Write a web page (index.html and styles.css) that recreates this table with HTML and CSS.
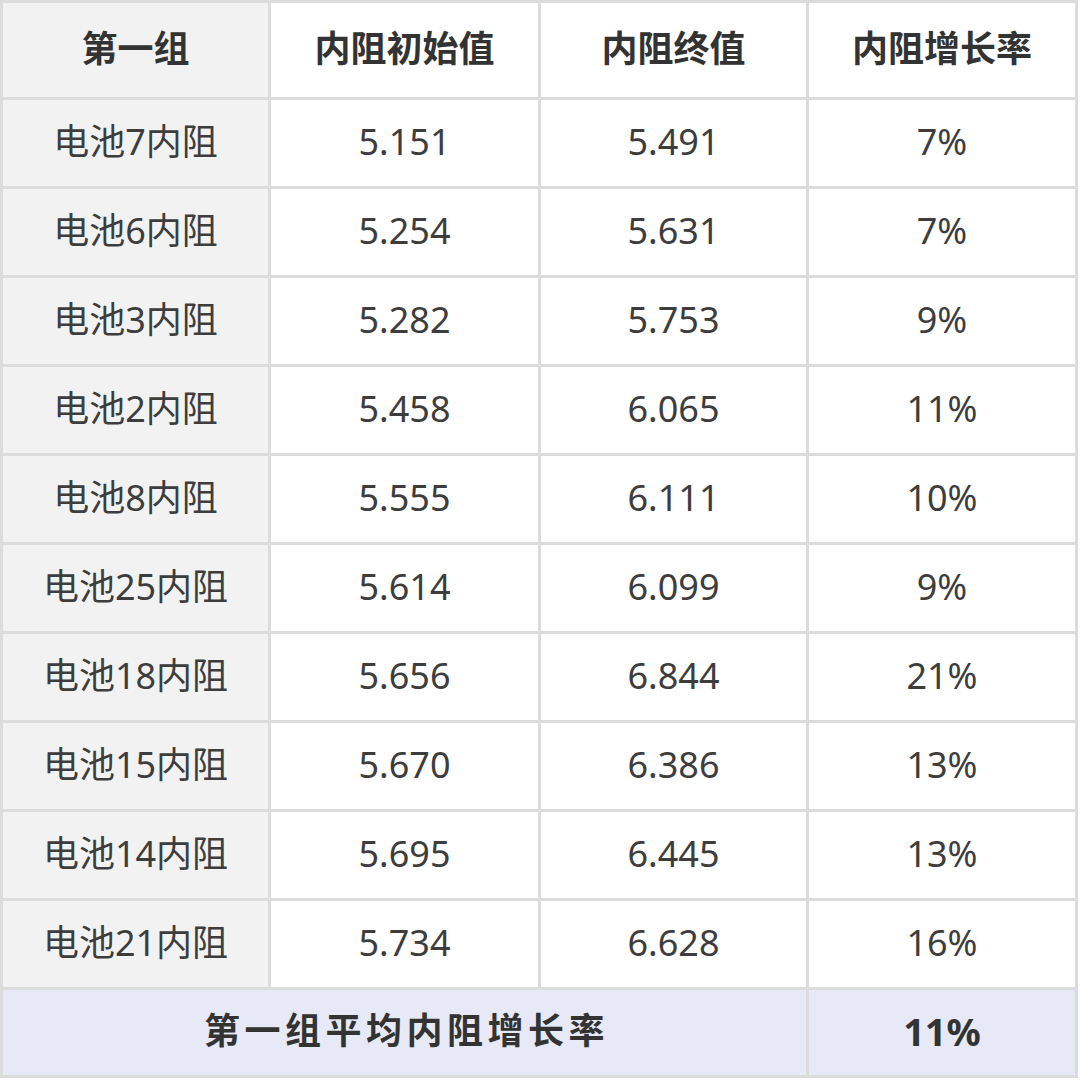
FILE: index.html
```html
<!DOCTYPE html>
<html lang="zh">
<head>
<meta charset="utf-8">
<title>第一组内阻</title>
<link rel="stylesheet" href="styles.css">
</head>
<body>
<div class="table">
  <div class="cell head first">第一组</div>
  <div class="cell head">内阻初始值</div>
  <div class="cell head">内阻终值</div>
  <div class="cell head">内阻增长率</div>

  <div class="cell first">电池7内阻</div><div class="cell">5.151</div><div class="cell">5.491</div><div class="cell">7%</div>
  <div class="cell first">电池6内阻</div><div class="cell">5.254</div><div class="cell">5.631</div><div class="cell">7%</div>
  <div class="cell first">电池3内阻</div><div class="cell">5.282</div><div class="cell">5.753</div><div class="cell">9%</div>
  <div class="cell first">电池2内阻</div><div class="cell">5.458</div><div class="cell">6.065</div><div class="cell">11%</div>
  <div class="cell first">电池8内阻</div><div class="cell">5.555</div><div class="cell">6.111</div><div class="cell">10%</div>
  <div class="cell first">电池25内阻</div><div class="cell">5.614</div><div class="cell">6.099</div><div class="cell">9%</div>
  <div class="cell first">电池18内阻</div><div class="cell">5.656</div><div class="cell">6.844</div><div class="cell">21%</div>
  <div class="cell first">电池15内阻</div><div class="cell">5.670</div><div class="cell">6.386</div><div class="cell">13%</div>
  <div class="cell first">电池14内阻</div><div class="cell">5.695</div><div class="cell">6.445</div><div class="cell">13%</div>
  <div class="cell first">电池21内阻</div><div class="cell">5.734</div><div class="cell">6.628</div><div class="cell">16%</div>

  <div class="cell total span3">第一组平均内阻增长率</div>
  <div class="cell total pct">11%</div>
</div>
</body>
</html>
```

FILE: styles.css
```css
html, body {
  margin: 0;
  padding: 0;
  background: #ffffff;
}
body {
  font-family: "Noto Sans", "Noto Sans CJK SC", sans-serif;
  color: #3d3d3d;
}
.table {
  display: grid;
  width: 1072px;
  grid-template-columns: 265px 267px 265px 266px;
  grid-template-rows: 94px repeat(10, 86px) 85px;
  gap: 3px;
  padding: 3px;
  background: #dcdcdc;
}
.cell {
  background: #ffffff;
  display: flex;
  align-items: center;
  justify-content: center;
  font-size: 36px;
  line-height: 1;
  white-space: nowrap;
  padding-bottom: 3px;
  box-sizing: border-box;
}
.first {
  background: #f2f2f2;
}
.head {
  font-weight: 700;
  color: #333333;
}
.total {
  background: #e7eaf6;
  font-weight: 700;
  color: #333333;
}
.span3 {
  grid-column: span 3;
  letter-spacing: 4.5px;
  padding-left: 4px;
}
.pct {
  font-size: 38px;
}
```
